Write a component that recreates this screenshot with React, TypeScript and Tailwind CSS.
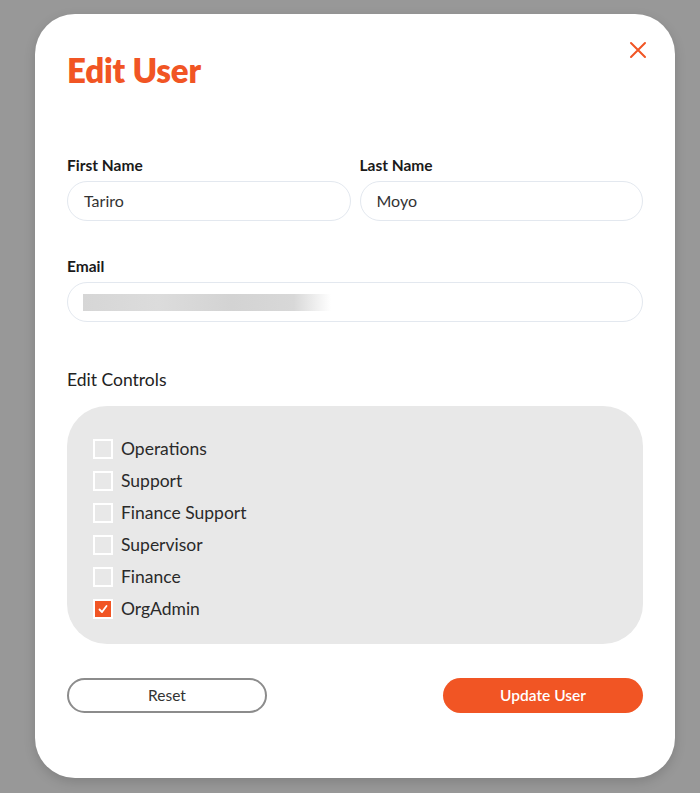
import React from "react";

const roles = [
  { name: "Operations", checked: false },
  { name: "Support", checked: false },
  { name: "Finance Support", checked: false },
  { name: "Supervisor", checked: false },
  { name: "Finance", checked: false },
  { name: "OrgAdmin", checked: true },
];

export default function App() {
  return (
    <div className="w-[700px] h-[793px] bg-[#989898] overflow-hidden pt-[14px] pl-[35px]" style={{ fontFamily: "Lato, 'Open Sans', sans-serif" }}>
      <div className="relative w-[640px] h-[764px] rounded-[40px] bg-white px-[32px] pt-[36px] shadow-[0_4px_12px_rgba(0,0,0,0.15)]">
        <button className="absolute left-[594px] top-[27px] w-[18px] h-[18px] flex items-center justify-center" aria-label="close">
          <svg width="18" height="18" viewBox="0 0 18 18" fill="none">
            <path d="M2 2L16 16M16 2L2 16" stroke="#f15524" strokeWidth="2" strokeLinecap="round" />
          </svg>
        </button>
        <h1 className="text-[33px] leading-[40px] font-extrabold text-[#f15524] tracking-[-0.2px]">Edit User</h1>

        <div className="mt-[65px] flex gap-[9px]">
          <div className="flex-1">
            <div className="text-[15.5px] leading-[20px] font-bold text-[#1a1a1a]">First Name</div>
            <div className="mt-[6px] h-[40px] rounded-full border border-[#e3e8ef] flex items-center px-[16px] text-[16px] text-[#333]">Tariro</div>
          </div>
          <div className="flex-1">
            <div className="text-[15.5px] leading-[20px] font-bold text-[#1a1a1a]">Last Name</div>
            <div className="mt-[6px] h-[40px] rounded-full border border-[#e3e8ef] flex items-center px-[16px] text-[16px] text-[#333]">Moyo</div>
          </div>
        </div>

        <div className="mt-[35px]">
          <div className="text-[15.5px] leading-[20px] font-bold text-[#1a1a1a]">Email</div>
          <div className="mt-[6px] h-[40px] rounded-full border border-[#e3e8ef] flex items-center px-[15px]">
            <div className="w-[248px] h-[17px] bg-[linear-gradient(90deg,#d6d6d6_0%,#dcdcdc_30%,#d3d3d3_60%,#d8d8d8_85%,#ffffff_100%)]" />
          </div>
        </div>

        <div className="mt-[46px] text-[17.5px] leading-[24px] text-[#222]">Edit Controls</div>

        <div className="mt-[14px] h-[238px] rounded-[40px] bg-[#e8e8e8] pt-[27px] pl-[26px]">
          {roles.map((r) => (
            <div key={r.name} className="h-[32px] flex items-center gap-[8px]">
              {r.checked ? (
                <div className="w-[20px] h-[20px] border-2 border-white bg-[#f15524] flex items-center justify-center">
                  <svg width="12" height="12" viewBox="0 0 12 12" fill="none">
                    <path d="M2.5 6.5L5 9L9.5 3" stroke="white" strokeWidth="1.8" strokeLinecap="round" strokeLinejoin="round" />
                  </svg>
                </div>
              ) : (
                <div className="w-[20px] h-[20px] border-2 border-white" />
              )}
              <span className="text-[17.5px] leading-[24px] text-[#2a2a2a]">{r.name}</span>
            </div>
          ))}
        </div>

        <div className="mt-[34px] flex justify-between">
          <button className="w-[200px] h-[35px] rounded-full border-2 border-[#8c8c8c] text-[15.5px] text-[#333] flex items-center justify-center">Reset</button>
          <button className="w-[200px] h-[35px] rounded-full bg-[#f15524] text-[15.5px] font-semibold text-white flex items-center justify-center">Update User</button>
        </div>
      </div>
    </div>
  );
}
